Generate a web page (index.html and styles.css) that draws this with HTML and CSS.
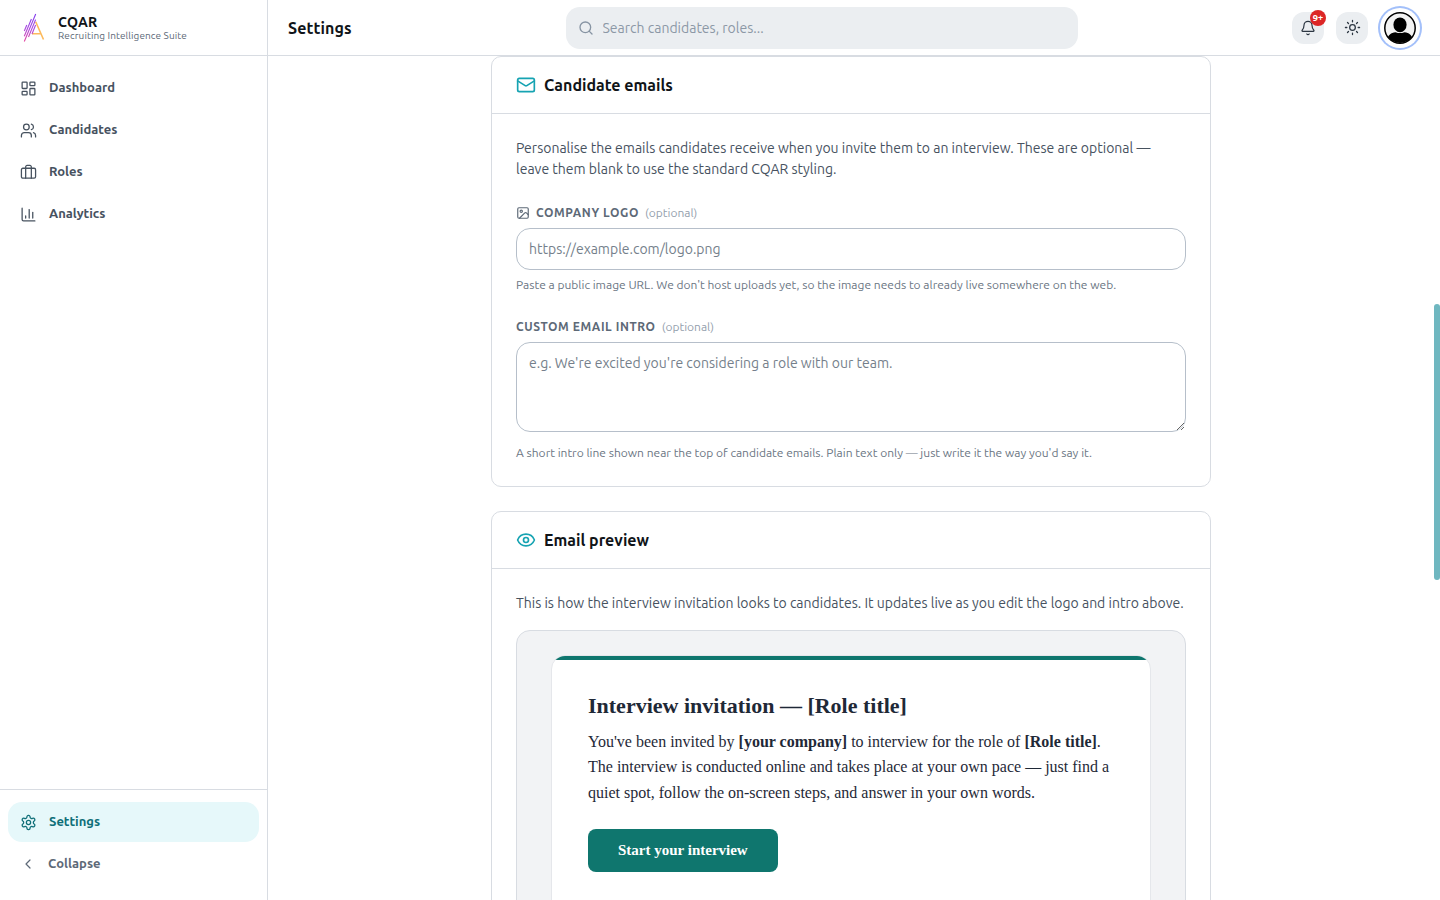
FILE: index.html
```html
<!DOCTYPE html>
<html lang="en">
<head>
  <meta charset="UTF-8">
  <meta name="viewport" content="width=device-width, initial-scale=1.0">
  <title>Settings - CQAR</title>
  <link rel="stylesheet" href="styles.css">
</head>
<body>
  <aside class="sidebar">
    <div class="brand">
      <svg class="brand-logo" width="22" height="30" viewBox="0 0 22 30" fill="none">
        <defs>
          <linearGradient id="stripes" x1="0" y1="0" x2="0" y2="30" gradientUnits="userSpaceOnUse">
            <stop offset="0" stop-color="#7c3aed"/>
            <stop offset="0.5" stop-color="#a849e0"/>
            <stop offset="1" stop-color="#ec4899"/>
          </linearGradient>
        </defs>
        <path d="M12.700 8.700L20.500 26.500M9 20.700h9" stroke="#fdba5c" stroke-width="1.600"/>
        <path d="M3.800 12L1.300 18M8.400 6L1.300 23.300M12.700 1L1.300 28.500M12.600 6.600L5.500 24M12.600 12L9 21" stroke="url(#stripes)" stroke-width="1.100"/>
      </svg>
      <div class="brand-text">
        <div class="brand-name">CQAR</div>
        <div class="brand-tagline">Recruiting Intelligence Suite</div>
      </div>
    </div>
    <nav class="nav">
      <a class="nav-item" href="#">
        <svg class="icon" width="17" height="17" viewBox="0 0 24 24"><rect x="3" y="3" width="7" height="9" rx="1"/><rect x="14" y="3" width="7" height="5" rx="1"/><rect x="14" y="12" width="7" height="9" rx="1"/><rect x="3" y="16" width="7" height="5" rx="1"/></svg>
        <span>Dashboard</span>
      </a>
      <a class="nav-item" href="#">
        <svg class="icon" width="17" height="17" viewBox="0 0 24 24"><path d="M16 21v-2a4 4 0 0 0-4-4H6a4 4 0 0 0-4 4v2"/><circle cx="9" cy="7" r="4"/><path d="M22 21v-2a4 4 0 0 0-3-3.870"/><path d="M16 3.130a4 4 0 0 1 0 7.750"/></svg>
        <span>Candidates</span>
      </a>
      <a class="nav-item" href="#">
        <svg class="icon" width="17" height="17" viewBox="0 0 24 24"><path d="M16 20V4a2 2 0 0 0-2-2h-4a2 2 0 0 0-2 2v16"/><rect x="2" y="6" width="20" height="14" rx="2"/></svg>
        <span>Roles</span>
      </a>
      <a class="nav-item" href="#">
        <svg class="icon" width="17" height="17" viewBox="0 0 24 24"><path d="M3 3v16a2 2 0 0 0 2 2h16"/><path d="M18 17V9"/><path d="M13 17V5"/><path d="M8 17v-3"/></svg>
        <span>Analytics</span>
      </a>
    </nav>
    <div class="nav-bottom">
      <a class="nav-item active" href="#">
        <svg class="icon" width="17" height="17" viewBox="0 0 24 24"><path d="M12.220 2h-.44a2 2 0 0 0-2 2v.18a2 2 0 0 1-1 1.730l-.43.25a2 2 0 0 1-2 0l-.15-.08a2 2 0 0 0-2.730.73l-.22.38a2 2 0 0 0 .73 2.730l.15.1a2 2 0 0 1 1 1.720v.51a2 2 0 0 1-1 1.740l-.15.09a2 2 0 0 0-.73 2.730l.22.38a2 2 0 0 0 2.730.73l.15-.08a2 2 0 0 1 2 0l.43.25a2 2 0 0 1 1 1.730V20a2 2 0 0 0 2 2h.44a2 2 0 0 0 2-2v-.18a2 2 0 0 1 1-1.730l.43-.25a2 2 0 0 1 2 0l.15.08a2 2 0 0 0 2.730-.73l.22-.39a2 2 0 0 0-.73-2.730l-.15-.08a2 2 0 0 1-1-1.740v-.5a2 2 0 0 1 1-1.740l.15-.09a2 2 0 0 0 .73-2.730l-.22-.38a2 2 0 0 0-2.730-.73l-.15.08a2 2 0 0 1-2 0l-.43-.25a2 2 0 0 1-1-1.730V4a2 2 0 0 0-2-2z"/><circle cx="12" cy="12" r="3"/></svg>
        <span>Settings</span>
      </a>
      <button class="nav-item collapse">
        <svg class="icon" width="16" height="16" viewBox="0 0 24 24"><path d="m15 18-6-6 6-6"/></svg>
        <span>Collapse</span>
      </button>
    </div>
  </aside>

  <div class="main">
    <header class="topbar">
      <h1>Settings</h1>
      <div class="search">
        <svg class="icon" width="16" height="16" viewBox="0 0 24 24"><circle cx="11" cy="11" r="8"/><path d="m21 21-4.300-4.300"/></svg>
        <input type="text" placeholder="Search candidates, roles...">
      </div>
      <div class="actions">
        <button class="round-button">
          <svg class="icon" width="16" height="16" viewBox="0 0 24 24"><path d="M10.268 21a2 2 0 0 0 3.464 0"/><path d="M3.262 15.326A1 1 0 0 0 4 17h16a1 1 0 0 0 .74-1.673C19.410 13.956 18 12.499 18 8A6 6 0 0 0 6 8c0 4.499-1.411 5.956-2.738 7.326"/></svg>
          <span class="badge">9+</span>
        </button>
        <button class="round-button">
          <svg class="icon" width="17" height="17" viewBox="0 0 24 24"><circle cx="12" cy="12" r="4"/><path d="M12 2v2M12 20v2M4.930 4.930l1.410 1.410M17.660 17.660l1.410 1.410M2 12h2M20 12h2M6.340 17.660l-1.410 1.410M19.070 4.930l-1.410 1.410"/></svg>
        </button>
        <button class="avatar">
          <svg width="32" height="32" viewBox="0 0 32 32">
            <defs><clipPath id="face"><circle cx="16" cy="16" r="15"/></clipPath></defs>
            <circle cx="16" cy="16" r="15.200" fill="#f3f3f3" stroke="#000" stroke-width="1.500"/>
            <g clip-path="url(#face)"><ellipse cx="16" cy="12.800" rx="6.600" ry="7.400"/><path d="M3 28c1-5 4-7.300 8.500-7.800 3 1.200 6 1.200 9 0 4.500.5 7.500 2.800 8.500 7.800v4H3z"/></g>
          </svg>
        </button>
      </div>
    </header>

    <main class="content">
      <section class="card">
        <div class="card-header">
          <svg class="icon" width="20" height="20" viewBox="0 0 24 24"><path d="m22 7-8.991 5.727a2 2 0 0 1-2.009 0L2 7"/><rect x="2" y="4" width="20" height="16" rx="2"/></svg>
          <h2>Candidate emails</h2>
        </div>
        <div class="card-body">
          <p class="intro">Personalise the emails candidates receive when you invite them to an interview. These are optional — leave them blank to use the standard CQAR styling.</p>
          <div class="field">
            <label for="logo">
              <svg class="icon" width="14" height="14" viewBox="0 0 24 24"><rect x="3" y="3" width="18" height="18" rx="2"/><circle cx="9" cy="9" r="2"/><path d="m21 15-3.086-3.086a2 2 0 0 0-2.828 0L6 21"/></svg>
              <span class="label-text">Company logo</span>
              <span class="optional">(optional)</span>
            </label>
            <input type="url" id="logo" placeholder="https://example.com/logo.png">
            <p class="hint">Paste a public image URL. We don't host uploads yet, so the image needs to already live somewhere on the web.</p>
          </div>
          <div class="field">
            <label for="emailIntro">
              <span class="label-text">Custom email intro</span>
              <span class="optional">(optional)</span>
            </label>
            <textarea id="emailIntro" placeholder="e.g. We're excited you're considering a role with our team."></textarea>
            <p class="hint">A short intro line shown near the top of candidate emails. Plain text only — just write it the way you'd say it.</p>
          </div>
        </div>
      </section>

      <section class="card">
        <div class="card-header">
          <svg class="icon" width="20" height="20" viewBox="0 0 24 24"><path d="M2.062 12.348a1 1 0 0 1 0-.696 10.750 10.750 0 0 1 19.876 0 1 1 0 0 1 0 .696 10.750 10.750 0 0 1-19.876 0"/><circle cx="12" cy="12" r="3"/></svg>
          <h2>Email preview</h2>
        </div>
        <div class="card-body">
          <p class="intro">This is how the interview invitation looks to candidates. It updates live as you edit the logo and intro above.</p>
          <div class="preview">
            <div class="email">
              <div class="email-bar"></div>
              <div class="email-body">
                <h3>Interview invitation — [Role title]</h3>
                <p>You've been invited by <strong>[your company]</strong> to interview for the role of <strong>[Role title]</strong>. The interview is conducted online and takes place at your own pace — just find a quiet spot, follow the on-screen steps, and answer in your own words.</p>
                <a class="email-button" href="#">Start your interview</a>
              </div>
            </div>
          </div>
        </div>
      </section>
    </main>
  </div>
  <div class="scroll-thumb"></div>
</body>
</html>
```

FILE: styles.css
```css
* {
  box-sizing: border-box;
}
body {
  font-family: Ubuntu, system-ui, "Noto Sans", sans-serif;
  font-size: 14px;
  line-height: 1.5;
  margin: 0;
  height: 100vh;
  display: flex;
  overflow: hidden;
  color: #101418;
  background-color: #ffffff;
}
h1, h2, h3, p {
  margin: 0;
}
a {
  text-decoration: none;
}
button {
  border: none;
  background: none;
  padding: 0;
  font-family: inherit;
}
.icon {
  display: block;
  flex-shrink: 0;
  fill: none;
  stroke: currentColor;
  stroke-width: 2;
  stroke-linecap: round;
  stroke-linejoin: round;
}

/* Sidebar */
.sidebar {
  width: 268px;
  flex-shrink: 0;
  border-right: 1px solid #d8dce2;
  display: flex;
  flex-direction: column;
}
.brand {
  height: 56px;
  padding: 1px 0 0 23px;
  display: flex;
  align-items: center;
  gap: 13px;
  border-bottom: 1px solid #d8dce2;
}
.brand-name {
  font-size: 14px;
  font-weight: 700;
  letter-spacing: 0.3px;
  line-height: 15px;
}
.brand-tagline {
  font-size: 10px;
  letter-spacing: 0.1px;
  line-height: 12px;
  color: #5d6977;
}
.nav {
  flex: 1;
  padding: 12px 8px;
  display: flex;
  flex-direction: column;
  gap: 2px;
}
.nav-bottom {
  height: 111px;
  padding: 12px 8px;
  border-top: 1px solid #d8dce2;
  display: flex;
  flex-direction: column;
  gap: 2px;
}
.nav-item {
  height: 40px;
  padding: 0 12px;
  display: flex;
  align-items: center;
  gap: 12px;
  border-radius: 14px;
  font-size: 13px;
  font-weight: 600;
  line-height: 19.5px;
  color: #47525f;
}
.nav-item .icon {
  stroke-width: 1.8;
}
.nav-item.active {
  background-color: #e6f8fa;
  color: #0f6f78;
}
.nav-item.collapse {
  color: #5d6977;
}

/* Top bar */
.main {
  flex: 1;
  min-width: 0;
  display: flex;
  flex-direction: column;
}
.topbar {
  height: 56px;
  flex-shrink: 0;
  padding: 0 20px;
  display: flex;
  align-items: center;
  border-bottom: 1px solid #d8dce2;
}
.topbar h1 {
  width: 278px;
  font-size: 16px;
  font-weight: 600;
  letter-spacing: 0.1px;
}
.search {
  width: 512px;
  height: 42px;
  padding: 0 12px;
  display: flex;
  align-items: center;
  gap: 8.5px;
  border-radius: 14px;
  background-color: #ebeef1;
  color: #8794a3;
}
.search input {
  flex: 1;
  border: none;
  background: none;
  outline: none;
  padding: 0;
  font-family: inherit;
  font-size: 14px;
}
.search input::placeholder {
  color: #8c98a6;
}
.actions {
  margin-left: auto;
  display: flex;
  align-items: center;
  gap: 12px;
}
.round-button {
  position: relative;
  width: 32px;
  height: 32px;
  display: flex;
  align-items: center;
  justify-content: center;
  border-radius: 12px;
  background-color: #ebeef1;
  color: #2c3642;
}
.round-button .icon {
  stroke-width: 1.8;
}
.badge {
  position: absolute;
  top: -2px;
  right: -2px;
  width: 16px;
  height: 16px;
  border-radius: 8px;
  background-color: #dc2626;
  color: #ffffff;
  font-family: "Open Sans", sans-serif;
  font-size: 9px;
  font-weight: 700;
  line-height: 15px;
  text-align: center;
}
.avatar {
  width: 40px;
  height: 40px;
  padding: 4px;
  border-radius: 50%;
  box-shadow: 0 0 0 2px #a3c0fa;
}
.avatar svg {
  display: block;
}

/* Settings cards */
.content {
  flex: 1;
  min-height: 0;
  overflow: hidden;
  padding-right: 6px;
  display: flex;
  flex-direction: column;
  align-items: center;
  gap: 24px;
}
.card {
  width: 720px;
  flex-shrink: 0;
  border: 1px solid #d8dce2;
  border-radius: 10px;
}
.card-header {
  height: 57px;
  padding: 0 24px;
  display: flex;
  align-items: center;
  gap: 8px;
  border-bottom: 1px solid #d8dce2;
}
.card-header .icon {
  color: #16a3b2;
}
.card-header h2 {
  font-size: 16px;
  font-weight: 600;
}
.card-body {
  padding: 24px;
}
.intro {
  line-height: 21px;
  color: #47525f;
}
.field {
  margin-top: 24px;
}
.field label {
  height: 18px;
  margin-bottom: 6px;
  display: flex;
  align-items: center;
  gap: 6px;
  color: #5d6977;
}
.label-text {
  font-size: 12px;
  font-weight: 600;
  letter-spacing: 0.6px;
  text-transform: uppercase;
}
.optional {
  font-size: 12px;
  color: #94a0ad;
}
.field input,
.field textarea {
  display: block;
  width: 100%;
  padding: 0 12px;
  border: 1px solid #b6bfca;
  border-radius: 14px;
  background-color: #ffffff;
  font-family: inherit;
  font-size: 14px;
  line-height: 21px;
}
.field input {
  height: 42px;
}
.field textarea {
  height: 90px;
  padding: 10px 12px;
  resize: vertical;
}
.field input::placeholder,
.field textarea::placeholder {
  color: #757f8b;
}
.hint {
  margin-top: 6px;
  font-size: 12px;
  line-height: 18px;
  color: #6b7683;
}
.field textarea + .hint {
  margin-top: 12px;
}

/* Email preview */
.preview {
  margin-top: 16px;
  height: 400px;
  padding: 24px 34px;
  border: 1px solid #d8dce2;
  border-radius: 14px;
  background-color: #f2f3f5;
}
.email {
  height: 360px;
  border: 1px solid #e5e7eb;
  border-radius: 14px;
  overflow: hidden;
  background-color: #ffffff;
}
.email-bar {
  height: 4px;
  background-color: #0f766e;
}
.email-body {
  padding: 32px 36px;
  font-family: "Liberation Serif", serif;
  font-size: 16px;
  color: #1f2937;
}
.email-body h3 {
  margin-bottom: 8px;
  font-size: 22px;
  line-height: 28.6px;
}
.email-body p {
  line-height: 25.6px;
}
.email-button {
  display: inline-block;
  margin-top: 23.6px;
  padding: 0 30px;
  border-radius: 8px;
  background-color: #0f766e;
  color: #ffffff;
  font-size: 15px;
  font-weight: 700;
  line-height: 43px;
}

/* Scrollbar */
.scroll-thumb {
  position: absolute;
  top: 304px;
  right: 0;
  width: 6px;
  height: 276px;
  border-radius: 3px;
  background-color: #6fb7c0;
}
```
